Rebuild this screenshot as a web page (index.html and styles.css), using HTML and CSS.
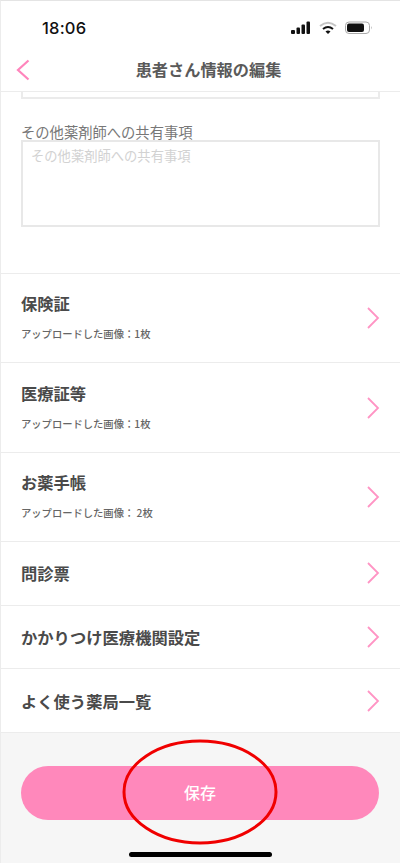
FILE: index.html
```html
<!DOCTYPE html>
<html lang="ja">
<head>
<meta charset="utf-8">
<title>患者さん情報の編集</title>
<link rel="stylesheet" href="styles.css">
</head>
<body>
<div class="phone">
  <div class="status">
    <span class="time">18:06</span>
    <div class="status-icons">
      <svg width="20" height="14" viewBox="0 0 20 14"><rect x="0" y="9" width="4" height="4" rx="1"/><rect x="5.500" y="6.500" width="3.500" height="6.500" rx="1"/><rect x="10.500" y="3.500" width="3.500" height="9.500" rx="1"/><rect x="15.500" y="0.500" width="3.500" height="12.500" rx="1"/></svg>
      <svg width="18" height="14" viewBox="0 0 18 14"><path d="M1 5 Q9 -1.500 17 5" fill="none" stroke="#c4c4c4" stroke-width="2"/><path d="M4 8 Q9 4 14 8" fill="none" stroke="#111" stroke-width="2"/><path d="M6.500 10.500 L9 13 L11.500 10.500 Q9 8.500 6.500 10.500Z" fill="#111"/></svg>
      <svg width="28" height="14" viewBox="0 0 28 14"><rect x="0.500" y="1" width="24" height="11.500" rx="3.500" fill="none" stroke="#aaa"/><rect x="2" y="2.500" width="17" height="8.500" rx="2"/><path d="M26 5 Q27.500 6.800 26 8.500Z" fill="#aaa"/></svg>
    </div>
  </div>
  <header class="nav">
    <svg class="back" width="14" height="22" viewBox="0 0 14 22"><path d="M12.500 1.500 L2 11 L12.500 20.500" fill="none" stroke="#ff85bc" stroke-width="2.200"/></svg>
    <h1 class="title">患者さん情報の編集</h1>
  </header>
  <main class="content">
    <div class="form">
      <div class="clipped-input"></div>
      <label class="field-label">その他薬剤師への共有事項</label>
      <div class="textarea">その他薬剤師への共有事項</div>
    </div>
    <a class="row row-tall"><div><div class="row-title">保険証</div><div class="row-sub">アップロードした画像：1枚</div></div><svg class="chev" width="14" height="22" viewBox="0 0 14 22"><path d="M2 1 L12 11 L2 21" fill="none" stroke="#ff94c4" stroke-width="1.800"/></svg></a>
    <a class="row row-tall"><div><div class="row-title">医療証等</div><div class="row-sub">アップロードした画像：1枚</div></div><svg class="chev" width="14" height="22" viewBox="0 0 14 22"><path d="M2 1 L12 11 L2 21" fill="none" stroke="#ff94c4" stroke-width="1.800"/></svg></a>
    <a class="row row-tall"><div><div class="row-title">お薬手帳</div><div class="row-sub">アップロードした画像： 2枚</div></div><svg class="chev" width="14" height="22" viewBox="0 0 14 22"><path d="M2 1 L12 11 L2 21" fill="none" stroke="#ff94c4" stroke-width="1.800"/></svg></a>
    <a class="row row-short"><div class="row-title">問診票</div><svg class="chev" width="14" height="22" viewBox="0 0 14 22"><path d="M2 1 L12 11 L2 21" fill="none" stroke="#ff94c4" stroke-width="1.800"/></svg></a>
    <a class="row row-short"><div class="row-title">かかりつけ医療機関設定</div><svg class="chev" width="14" height="22" viewBox="0 0 14 22"><path d="M2 1 L12 11 L2 21" fill="none" stroke="#ff94c4" stroke-width="1.800"/></svg></a>
    <a class="row row-short"><div class="row-title">よく使う薬局一覧</div><svg class="chev" width="14" height="22" viewBox="0 0 14 22"><path d="M2 1 L12 11 L2 21" fill="none" stroke="#ff94c4" stroke-width="1.800"/></svg></a>
  </main>
  <footer class="footer">
    <button class="save">保存</button>
    <div class="home"></div>
    <svg class="annotation" width="158" height="106" viewBox="0 0 158 106"><ellipse cx="79" cy="53" rx="76" ry="51" fill="none" stroke="#f00000" stroke-width="3"/></svg>
  </footer>
</div>
</body>
</html>
```

FILE: styles.css
```css
* { box-sizing: border-box; }
html, body { margin: 0; padding: 0; background: #fff; }
body { font-family: "Noto Sans CJK JP", "Noto Sans", sans-serif; color: #555; }
.phone {
  width: 400px; height: 863px; display: flex; flex-direction: column;
  border-top: 1px solid #e4e4e4; border-left: 1px solid #ececec; overflow: hidden;
}
.status { height: 54px; flex: none; display: flex; justify-content: space-between; align-items: center; padding: 0 27px 0 41px; }
.time { font-family: Inter, "Liberation Sans", sans-serif; font-size: 16.500px; font-weight: 500; color: #111; letter-spacing: 0.200px; }
.status-icons { display: flex; align-items: center; gap: 8px; margin-top: -1px; }
.status-icons svg { fill: #111; display: block; }
.nav { height: 37px; flex: none; position: relative; display: flex; align-items: center; justify-content: center; border-bottom: 1px solid #ececec; padding: 0 0 8px 16px; }
.back { position: absolute; left: 15px; top: 4px; }
.title { margin: 0; font-size: 16.200px; font-weight: 700; color: #5a5a5a; line-height: 20px; }
.content { flex: 1; display: flex; flex-direction: column; min-height: 0; }
.form { height: 181px; flex: none; padding: 0 20px; }
.clipped-input { height: 7px; border: 2px solid #ebebeb; border-top: 0; }
.field-label { display: block; margin-top: 24px; font-size: 14.300px; line-height: 17px; color: #777; }
.textarea { height: 87px; border: 2px solid #e8e8e8; padding: 5px 8px; font-size: 13.300px; line-height: 18px; color: #d2d2d2; }
.row { display: flex; align-items: center; justify-content: space-between; padding: 0 20px; border-top: 1px solid #ececec; }
.row-tall { height: 89.500px; }
.row-short { height: 63.700px; }
.row-title { font-size: 16.300px; font-weight: 700; line-height: 20px; color: #4a4a4a; }
.row-tall .row-title { margin-top: -3px; }
.row-sub { margin-top: 14px; font-size: 10.300px; font-weight: 500; line-height: 13px; color: #666; }
.chev { display: block; flex: none; }
.footer { height: 131px; flex: none; position: relative; background: #f6f6f6; border-top: 1px solid #ececec; padding: 33px 20px 0; }
.save { display: block; width: 358px; height: 54px; border: 0; border-radius: 27px; background: #ff88bb; color: #fff; font: 500 16px/50px "Noto Sans CJK JP", sans-serif; padding: 0 0 3px; }
.home { position: absolute; left: 128px; top: 119px; width: 143px; height: 5px; border-radius: 3px; background: #000; }
.annotation { position: absolute; left: 120px; top: 6px; }
```
